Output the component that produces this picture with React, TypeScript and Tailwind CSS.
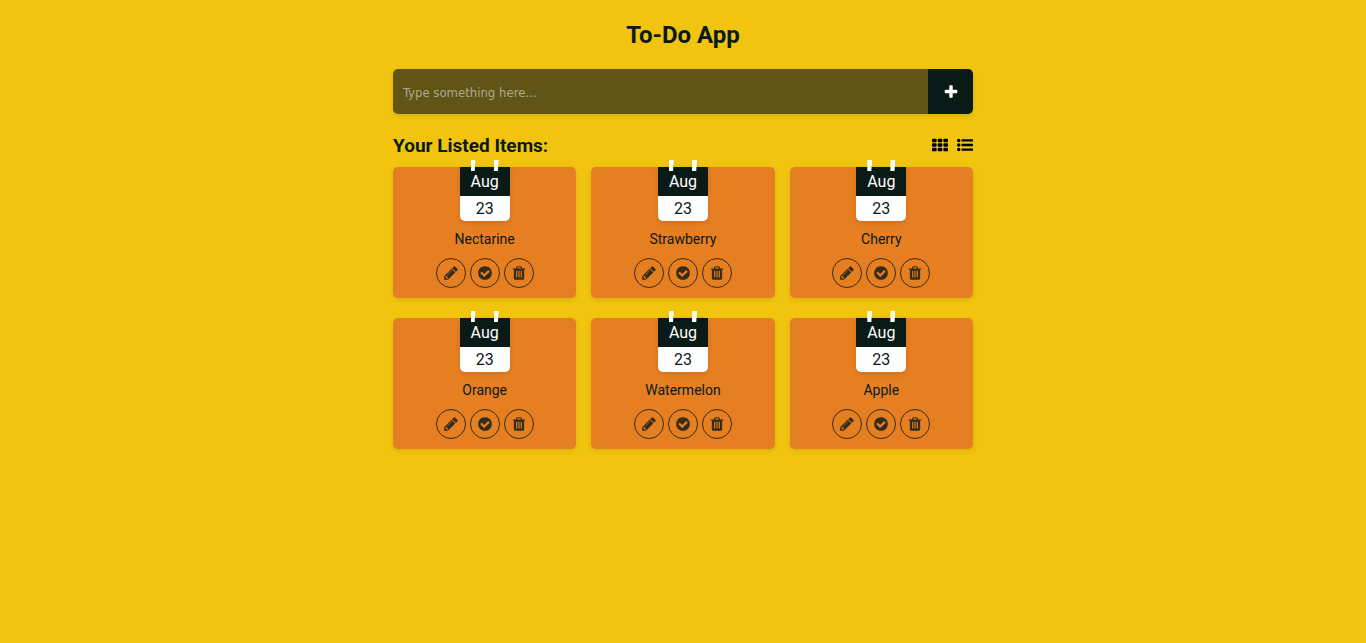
import { useState } from "react";
import type { FormEvent, ReactNode } from "react";

type Item = { id: number; name: string; month: string; day: number };

const initialItems: Item[] = ["Nectarine", "Strawberry", "Cherry", "Orange", "Watermelon", "Apple"].map(
  (name, id) => ({ id, name, month: "Aug", day: 23 }),
);

const actionClass =
  "flex size-[30px] cursor-pointer items-center justify-center rounded-full border border-[#091a17] text-[#091a17] opacity-80";

function Icon({ children }: { children: ReactNode }) {
  return (
    <svg viewBox="0 0 1792 1792" className="block size-4" fill="currentColor" aria-hidden="true">
      {children}
    </svg>
  );
}

const PlusIcon = () => (
  <Icon>
    <path d="M1600 736v192q0 40-28 68t-68 28h-416v416q0 40-28 68t-68 28h-192q-40 0-68-28t-28-68v-416h-416q-40 0-68-28t-28-68v-192q0-40 28-68t68-28h416v-416q0-40 28-68t68-28h192q40 0 68 28t28 68v416h416q40 0 68 28t28 68z" />
  </Icon>
);

const PencilIcon = () => (
  <Icon>
    <path d="M491 1536l91-91-235-235-91 91v107h128v128h107zm523-928q0-22-22-22-10 0-17 7l-542 542q-7 7-7 17 0 22 22 22 10 0 17-7l542-542q7-7 7-17zm-54-192l416 416-832 832h-416v-416zm683 96q0 53-37 90l-166 166-416-416 166-165q36-38 90-38 53 0 91 38l235 234q37 39 37 91z" />
  </Icon>
);

const CheckIcon = () => (
  <Icon>
    <path d="M1412 734q0-28-18-46l-91-90q-19-19-45-19t-45 19l-408 407-226-226q-19-19-45-19t-45 19l-91 90q-18 18-18 46 0 27 18 45l362 362q19 19 45 19 27 0 46-19l543-543q18-18 18-45zm252 162q0 209-103 385.5t-279.5 279.5-385.5 103-385.5-103-279.5-279.5-103-385.5 103-385.5 279.5-279.5 385.5-103 385.5 103 279.5 279.5 103 385.5z" />
  </Icon>
);

const TrashIcon = () => (
  <Icon>
    <path d="M704 1376v-704q0-14-9-23t-23-9h-64q-14 0-23 9t-9 23v704q0 14 9 23t23 9h64q14 0 23-9t9-23zm256 0v-704q0-14-9-23t-23-9h-64q-14 0-23 9t-9 23v704q0 14 9 23t23 9h64q14 0 23-9t9-23zm256 0v-704q0-14-9-23t-23-9h-64q-14 0-23 9t-9 23v704q0 14 9 23t23 9h64q14 0 23-9t9-23zm-544-992h448l-48-117q-7-9-17-11h-317q-10 2-17 11zm928 32v64q0 14-9 23t-23 9h-96v948q0 83-47 143.5t-113 60.5h-832q-66 0-113-58.5t-47-141.5v-952h-96q-14 0-23-9t-9-23v-64q0-14 9-23t23-9h309l70-167q15-37 54-63t79-26h320q40 0 79 26t54 63l70 167h309q14 0 23 9t9 23z" />
  </Icon>
);

const rows = [192, 704, 1216];

const GridIcon = () => (
  <Icon>
    {rows.map((y) =>
      [0, 640, 1280].map((x) => <rect key={`${x}-${y}`} x={x} y={y} width="512" height="384" rx="96" />),
    )}
  </Icon>
);

const ListIcon = () => (
  <Icon>
    {rows.map((y) => (
      <g key={y}>
        <circle cx="192" cy={y + 192} r="192" />
        <rect x="512" y={y + 64} width="1280" height="256" rx="32" />
      </g>
    ))}
  </Icon>
);

function CalendarBadge({ month, day }: { month: string; day: number }) {
  return (
    <div className="relative w-[50px] rounded-b-[5px] text-center shadow-[0_2px_5px_rgba(0,0,0,0.1)]">
      <span className="absolute -top-[7px] left-[11px] h-[11px] w-[5px] bg-white [clip-path:polygon(0_0,95%_0,80%_100%,0_100%)]" />
      <span className="absolute -top-[7px] right-[11px] h-[11px] w-[5px] bg-white [clip-path:polygon(5%_0,100%_0,85%_100%,0_100%)]" />
      <div className="h-[29px] bg-[#091a17] leading-[29px] text-white">{month}</div>
      <div className="h-[25px] rounded-b-[5px] bg-white leading-[25px] text-[#091a17]">{day}</div>
    </div>
  );
}

function Card({ item, onEdit, onDelete }: { item: Item; onEdit: () => void; onDelete: () => void }) {
  return (
    <li className="flex flex-col items-center rounded-[5px] bg-[#e67e22] pb-[10px] shadow-[0_2px_5px_rgba(0,0,0,0.1)]">
      <CalendarBadge month={item.month} day={item.day} />
      <p className="mt-2 mb-[9px] text-sm leading-5 text-[#091a17]">{item.name}</p>
      <div className="flex gap-1">
        <button type="button" aria-label="Edit" onClick={onEdit} className={actionClass}>
          <PencilIcon />
        </button>
        <button type="button" aria-label="Complete" className={actionClass}>
          <CheckIcon />
        </button>
        <button type="button" aria-label="Delete" onClick={onDelete} className={actionClass}>
          <TrashIcon />
        </button>
      </div>
    </li>
  );
}

export default function App() {
  const [items, setItems] = useState(initialItems);
  const [text, setText] = useState("");
  const [grid, setGrid] = useState(true);

  const add = (e: FormEvent) => {
    e.preventDefault();
    if (!text.trim()) return;
    setItems([...items, { id: Date.now(), name: text.trim(), month: "Aug", day: 23 }]);
    setText("");
  };

  return (
    <div className="min-h-screen bg-[#f1c40f] px-4 py-5 font-[Roboto,sans-serif] text-[#091a17]">
      <main className="mx-auto max-w-[580px]">
        <h1 className="text-center text-2xl leading-[31px] font-bold">To-Do App</h1>
        <form
          onSubmit={add}
          className="mt-[18px] flex h-[45px] overflow-hidden rounded-[5px] shadow-[0_2px_5px_rgba(0,0,0,0.1)]"
        >
          <input
            aria-label="New item"
            value={text}
            onChange={(e) => setText(e.target.value)}
            placeholder="Type something here..."
            className="min-w-0 flex-1 bg-[#605416] px-[10px] pt-0.5 font-['DejaVu_Sans_Condensed','DejaVu_Sans',sans-serif] text-[13px] text-white outline-none placeholder:text-[#afa98a]"
          />
          <button
            type="submit"
            aria-label="Add"
            className="flex w-[45px] cursor-pointer items-center justify-center bg-[#091a17] text-white"
          >
            <PlusIcon />
          </button>
        </form>
        <div className="mt-5 mb-[10px] flex items-center justify-between">
          <h2 className="pt-px text-[19px] leading-[22px] font-bold">Your Listed Items:</h2>
          <div className="flex gap-[9px] pb-0.5 text-black">
            <button type="button" aria-label="Grid view" onClick={() => setGrid(true)} className="cursor-pointer">
              <GridIcon />
            </button>
            <button type="button" aria-label="List view" onClick={() => setGrid(false)} className="cursor-pointer">
              <ListIcon />
            </button>
          </div>
        </div>
        <ul className={grid ? "grid grid-cols-3 gap-x-[15px] gap-y-5" : "grid grid-cols-1 gap-y-5"}>
          {items.map((item) => (
            <Card
              key={item.id}
              item={item}
              onEdit={() => setText(item.name)}
              onDelete={() => setItems(items.filter((i) => i.id !== item.id))}
            />
          ))}
        </ul>
      </main>
    </div>
  );
}
